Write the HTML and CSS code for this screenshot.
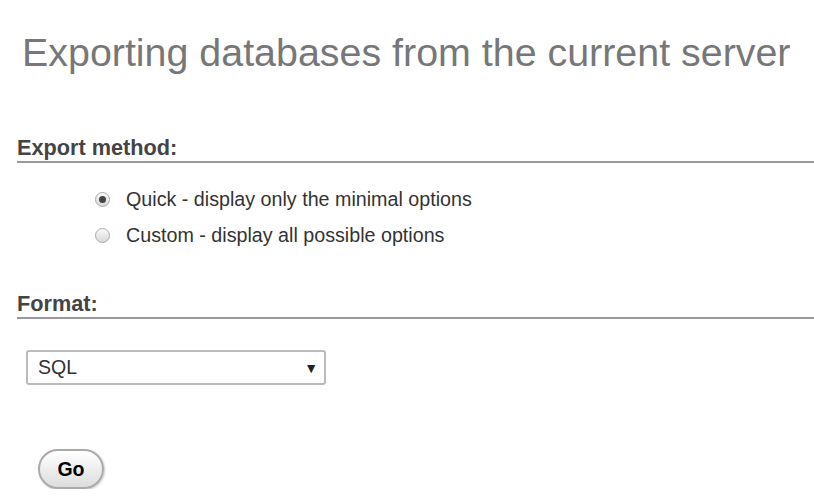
FILE: index.html
```html
<!DOCTYPE html>
<html lang="en">
<head>
    <meta charset="UTF-8">
    <title>Export</title>
    <link rel="stylesheet" href="styles.css">
</head>
<body>
    <div class="page">
        <h2 class="page-title">Exporting databases from the current server</h2>

        <form class="export-form">
            <div class="section">
                <h3 class="section-title">Export method:</h3>
                <ul class="radio-list">
                    <li>
                        <label class="radio">
                            <span class="radio-dot checked"></span>
                            Quick - display only the minimal options
                        </label>
                    </li>
                    <li>
                        <label class="radio">
                            <span class="radio-dot"></span>
                            Custom - display all possible options
                        </label>
                    </li>
                </ul>
            </div>

            <div class="section">
                <h3 class="section-title">Format:</h3>
                <div class="select-box">
                    <span>SQL</span>
                    <span class="arrow">&#9660;</span>
                </div>
            </div>

            <div class="actions">
                <button type="button" class="go-button">Go</button>
            </div>
        </form>
    </div>
</body>
</html>
```

FILE: styles.css
```css
body {
    font-family: 'Liberation Sans', Arial, sans-serif;
    margin: 0;
    background-color: #fff;
    color: #333;
}
.page {
    padding: 28px 0 0 17px;
}
.page-title {
    font-size: 39.4px;
    font-weight: normal;
    color: #777;
    margin: 0 0 0 5px;
    line-height: 48px;
}

/* Sections */
.section {
    margin-top: 61px;
}
.section + .section {
    margin-top: 40px;
}
.section-title {
    font-size: 21.7px;
    font-weight: bold;
    color: #444;
    margin: 0;
    padding-bottom: 2px;
    line-height: 22px;
    border-bottom: 2px solid #999;
}

.radio-list {
    list-style: none;
    margin: 0;
    padding: 18px 0 0 78px;
}
.radio-list li {
    height: 36px;
    display: flex;
    align-items: center;
}
.radio {
    display: flex;
    align-items: center;
    gap: 16px;
    font-size: 19.7px;
    color: #333;
    line-height: 22px;
}
.radio-dot {
    width: 13px;
    height: 13px;
    border-radius: 50%;
    border: 1px solid #a9a9a9;
    background: linear-gradient(#fafafa, #d8d8d8);
    display: flex;
    align-items: center;
    justify-content: center;
}
.radio-dot.checked::after {
    content: '';
    width: 7px;
    height: 7px;
    border-radius: 50%;
    background-color: #444;
}

/* Select */
.select-box {
    margin: 31px 0 0 9px;
    box-sizing: border-box;
    width: 300px;
    height: 35px;
    border: 2px solid #bbb;
    border-radius: 3px;
    padding: 0 6px 0 10px;
    display: flex;
    align-items: center;
    justify-content: space-between;
    font-size: 19.5px;
    color: #333;
}
.select-box .arrow {
    font-size: 14px;
    color: #222;
}

/* Button */
.actions {
    margin-top: 64px;
    padding-left: 21px;
}
.go-button {
    font-family: 'Liberation Sans', Arial, sans-serif;
    font-size: 19.5px;
    font-weight: bold;
    color: #000;
    width: 66px;
    height: 40px;
    border: 2px solid #aaa;
    border-radius: 20px;
    background: linear-gradient(#fff, #ddd);
    box-shadow: 1px 1px 2px #ccc;
    cursor: pointer;
}
```
